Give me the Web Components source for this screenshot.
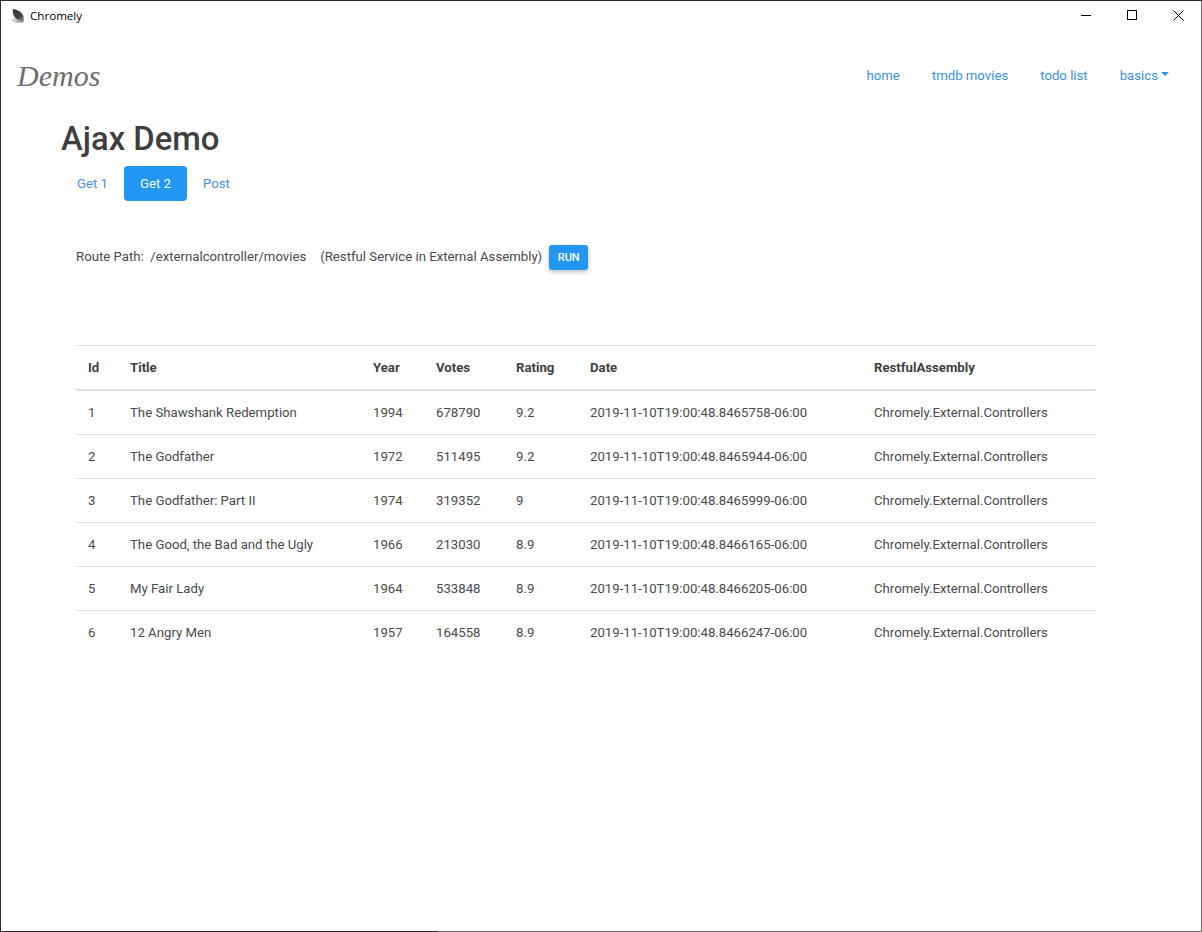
<!DOCTYPE html>
<html>
<head>
<meta charset="utf-8">
<title>Chromely</title>
<style>
  html, body { margin: 0; height: 100%; background: #fff; }
  body { font-family: Roboto, "Liberation Sans", sans-serif; color: #3f3f3f; }
</style>
</head>
<body>
<app-window>
  <title-bar slot="title">Chromely</title-bar>
  <nav-bar slot="nav" brand="Demos"></nav-bar>
  <h-title>Ajax Demo</h-title>
  <pill-tabs items="Get 1,Get 2,Post" active="1"></pill-tabs>
  <route-line></route-line>
  <movie-table></movie-table>
</app-window>

<script>
class AppWindow extends HTMLElement {
  constructor() {
    super();
    this.attachShadow({ mode: "open" }).innerHTML = `
    <style>
      :host {
        display: flex;
        flex-direction: column;
        position: relative;
        box-sizing: border-box;
        height: 932px;
        border: 1px solid #2b2b2b;
        border-right-color: #6e6e6e;
        border-bottom-color: #6e6e6e;
      }
      /* bottom edge is only dark up to here, the rest is the grey of the right edge */
      :host::after {
        content: "";
        position: absolute;
        left: -1px;
        bottom: -1px;
        width: 438px;
        height: 1px;
        background: #2b2b2b;
      }
      .content { padding: 0 0 0 60px; }
    </style>
    <slot name="title"></slot>
    <slot name="nav"></slot>
    <div class="content"><slot></slot></div>`;
  }
}

class TitleBar extends HTMLElement {
  constructor() {
    super();
    this.attachShadow({ mode: "open" }).innerHTML = `
    <style>
      :host {
        display: flex;
        align-items: center;
        height: 29px;
        font: 11.6px "Open Sans", "Liberation Sans", sans-serif;
        color: #000;
      }
      svg { display: block; }
      .icon { margin-left: 8px; margin-right: 5px; }
      .label { flex: 1; }
      .btns { display: flex; }
      .btn { width: 46px; height: 29px; display: flex; align-items: center; justify-content: center; }
    </style>
    <svg class="icon" width="16" height="16" viewBox="0 0 16 16">
      <defs>
        <linearGradient id="leaf" x1="0.2" y1="0" x2="0.7" y2="1">
          <stop offset="0" stop-color="#333"/>
          <stop offset="0.65" stop-color="#444"/>
          <stop offset="1" stop-color="#888"/>
        </linearGradient>
        <linearGradient id="wing" x1="0" y1="0.5" x2="1" y2="0.5">
          <stop offset="0" stop-color="#f4f4f4"/>
          <stop offset="1" stop-color="#8a8a8a"/>
        </linearGradient>
      </defs>
      <path d="M0.500 11.500C3 9.500 7 9.500 10 11L15 14C11 15.500 4 15.500 0.500 11.500Z" fill="url(#wing)"/>
      <path d="M4 1C8.500 1.500 13 4 14.500 8.500L15 13.500C11 13 6 11 4.500 7C4 5 3.500 3 4 1Z" fill="url(#leaf)"/>
    </svg>
    <span class="label"><slot></slot></span>
    <div class="btns">
      <div class="btn"><svg width="11" height="11" viewBox="0 0 11 11"><path d="M0 5.500H10" stroke="#000" fill="none"/></svg></div>
      <div class="btn"><svg width="11" height="11" viewBox="0 0 11 11"><rect x="0.500" y="0.500" width="9" height="9" stroke="#000" fill="none"/></svg></div>
      <div class="btn"><svg width="11" height="11" viewBox="0 0 11 11"><path d="M0.500 0.500L10.500 10.500M10.500 0.500L0.500 10.500" stroke="#000" stroke-width="1" fill="none"/></svg></div>
    </div>`;
  }
}

class NavBar extends HTMLElement {
  constructor() {
    super();
    this.attachShadow({ mode: "open" }).innerHTML = `
    <style>
      :host {
        display: flex;
        align-items: center;
        justify-content: space-between;
        height: 90px;
        padding: 0 16px 0 16px;
        box-sizing: border-box;
      }
      .brand {
        font: italic 30px "Liberation Serif", serif;
        color: #6d6d6d;
        margin-top: 1px;
      }
      nav { display: flex; font-size: 13.2px; color: #3a8fe8; margin-top: 1px; }
      nav span { padding: 0 16px; display: flex; align-items: center; }
      .caret {
        display: inline-block;
        margin-left: 3px;
        margin-bottom: 3px;
        border-top: 4px solid #2196f3;
        border-left: 4px solid transparent;
        border-right: 4px solid transparent;
      }
    </style>
    <div class="brand">${this.getAttribute("brand")}</div>
    <nav>
      <span>home</span>
      <span>tmdb movies</span>
      <span>todo list</span>
      <span>basics<i class="caret"></i></span>
    </nav>`;
  }
}

class HTitle extends HTMLElement {
  constructor() {
    super();
    this.attachShadow({ mode: "open" }).innerHTML = `
    <style>
      :host {
        display: block;
        font-size: 32.8px;
        font-weight: 500;
        line-height: 38px;
        color: #3f3f3f;
        height: 46px;
      }
    </style>
    <slot></slot>`;
  }
}

class PillTabs extends HTMLElement {
  constructor() {
    super();
    const active = Number(this.getAttribute("active"));
    const items = this.getAttribute("items").split(",");
    this.attachShadow({ mode: "open" }).innerHTML = `
    <style>
      :host { display: flex; font-size: 13.2px; height: 35px; }
      a {
        display: flex;
        align-items: center;
        padding: 0 16px;
        color: #4a90e2;
        border-radius: 4px;
      }
      a.active { background: #2196f3; color: #fff; }
    </style>
    ${items.map((t, i) => `<a class="${i === active ? "active" : ""}">${t}</a>`).join("")}`;
  }
}

class RouteLine extends HTMLElement {
  constructor() {
    super();
    this.attachShadow({ mode: "open" }).innerHTML = `
    <style>
      :host {
        display: flex;
        align-items: center;
        margin: 44px 0 0 15px;
        height: 25px;
        font-size: 13.2px;
        color: #4a4a4a;
        white-space: pre;
      }
      span { padding-bottom: 2px; }
      button {
        all: unset;
        margin-left: 7px;
        width: 39px;
        height: 25px;
        display: flex;
        align-items: center;
        justify-content: center;
        background: #2196f3;
        color: #fff;
        font: 500 11px Roboto, sans-serif;
        border-radius: 3px;
        box-shadow: 0 2px 5px rgba(0,0,0,.25);
      }
    </style>
    <span>Route Path:  /externalcontroller/movies</span><span style="margin-left:14px">(Restful Service in External Assembly)</span>
    <button>RUN</button>`;
  }
}

const MOVIES = [
  [1, "The Shawshank Redemption", 1994, 678790, "9.2", "2019-11-10T19:00:48.8465758-06:00"],
  [2, "The Godfather", 1972, 511495, "9.2", "2019-11-10T19:00:48.8465944-06:00"],
  [3, "The Godfather: Part II", 1974, 319352, "9", "2019-11-10T19:00:48.8465999-06:00"],
  [4, "The Good, the Bad and the Ugly", 1966, 213030, "8.9", "2019-11-10T19:00:48.8466165-06:00"],
  [5, "My Fair Lady", 1964, 533848, "8.9", "2019-11-10T19:00:48.8466205-06:00"],
  [6, "12 Angry Men", 1957, 164558, "8.9", "2019-11-10T19:00:48.8466247-06:00"]
];

class MovieTable extends HTMLElement {
  constructor() {
    super();
    const heads = ["Id", "Title", "Year", "Votes", "Rating", "Date", "RestfulAssembly"];
    const rows = MOVIES.map(m => `
      <div class="row">${m.map(v => `<span>${v}</span>`).join("")}<span>Chromely.External.Controllers</span></div>`).join("");
    this.attachShadow({ mode: "open" }).innerHTML = `
    <style>
      :host {
        display: block;
        width: 1020px;
        margin: 75px 0 0 15px;
        font-size: 13.2px;
        color: #4a4a4a;
      }
      .row {
        display: grid;
        grid-template-columns: 42px 243px 63px 80px 74px 284px 1fr;
        height: 44px;
        box-sizing: border-box;
        border-top: 1px solid #dee2e6;
        align-items: center;
      }
      .row span { padding-left: 12px; }
      .head { border-bottom: 2px solid #dee2e6; height: 46px; font-weight: 700; color: #3f3f3f; }
      .head + .row { border-top: 0; height: 43px; }
    </style>
    <div class="row head">${heads.map(h => `<span>${h}</span>`).join("")}</div>${rows}`;
  }
}

customElements.define("app-window", AppWindow);
customElements.define("title-bar", TitleBar);
customElements.define("nav-bar", NavBar);
customElements.define("h-title", HTitle);
customElements.define("pill-tabs", PillTabs);
customElements.define("route-line", RouteLine);
customElements.define("movie-table", MovieTable);
</script>
</body>
</html>
